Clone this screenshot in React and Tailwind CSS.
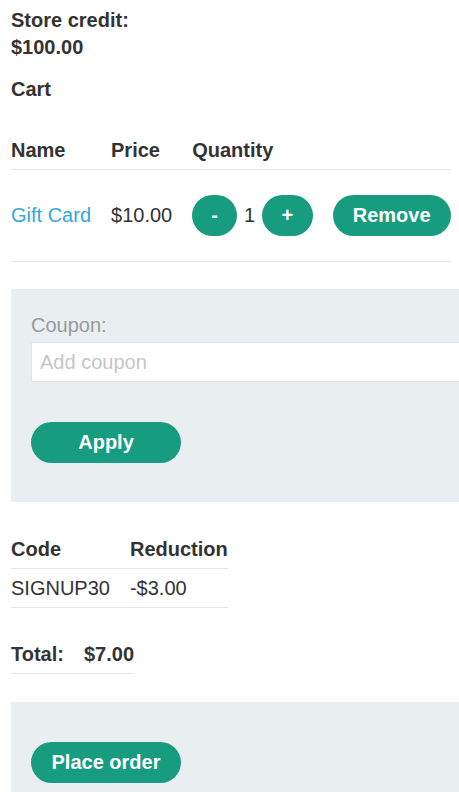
import React from "react";

const green = "bg-[#179c80]";

function Btn({ children, className = "" }) {
  return (
    <button
      className={`${green} h-[41px] rounded-full font-bold text-white text-[20px] leading-[27px] ${className}`}
    >
      {children}
    </button>
  );
}

export default function App() {
  return (
    <div
      className="h-[792px] w-full overflow-hidden bg-white text-[#333333] text-[20px] leading-[27px]"
      style={{ fontFamily: '"Liberation Sans", Arial, sans-serif' }}
    >
      <div className="pl-[11px] pt-[7px]">
        <div className="font-bold">Store credit:</div>
        <div className="font-bold">$100.00</div>
        <div className="mt-[15px] font-bold">Cart</div>

        <table className="mt-[28px] border-collapse">
          <thead>
            <tr className="border-b border-[#e3e5e6]">
              <th className="pt-[6px] pb-[5px] pr-[20px] text-left font-bold">Name</th>
              <th className="pt-[6px] pb-[5px] pr-[20px] text-left font-bold">Price</th>
              <th className="pt-[6px] pb-[5px] pr-[20px] text-left font-bold">Quantity</th>
              <th className="pt-[6px] pb-[5px]"></th>
            </tr>
          </thead>
          <tbody>
            <tr className="border-b border-[#e3e5e6]">
              <td className="py-[25px] pr-[20px] align-middle">
                <a className="text-[#35a7dd]">Gift Card</a>
              </td>
              <td className="py-[25px] pr-[20px] align-middle">$10.00</td>
              <td className="py-[25px] pr-[20px] align-middle">
                <div className="flex items-center">
                  <Btn className="px-[19px]">-</Btn>
                  <span className="mx-[7px]">1</span>
                  <Btn className="px-[19.5px]">+</Btn>
                </div>
              </td>
              <td className="py-[25px] align-middle">
                <Btn className="px-[20px]">Remove</Btn>
              </td>
            </tr>
          </tbody>
        </table>
      </div>

      <div className="ml-[11px] mt-[27px] overflow-hidden bg-[#e9eef1] pl-[20px] pt-[23px] pb-[39px]">
        <div className="text-[#9a9a9a]">Coupon:</div>
        <input
          className="mt-[3px] block h-[40px] w-[calc(100%+20px)] border border-[#e2e4e5] bg-white px-[8px] text-[20px] text-[#333] outline-none placeholder:text-[#c6c6c6]"
          placeholder="Add coupon"
        />
        <Btn className="mt-[40px] block h-[40px] w-[150px]">Apply</Btn>
      </div>

      <div className="pl-[11px]">
        <table className="mt-[28px] border-collapse">
          <thead>
            <tr className="border-b border-[#e3e5e6]">
              <th className="pt-[6px] pb-[5px] pr-[20px] text-left font-bold">Code</th>
              <th className="pt-[6px] pb-[5px] text-left font-bold">Reduction</th>
            </tr>
          </thead>
          <tbody>
            <tr className="border-b border-[#e3e5e6]">
              <td className="pt-[6px] pb-[5px] pr-[20px]">SIGNUP30</td>
              <td className="pt-[6px] pb-[5px]">-$3.00</td>
            </tr>
          </tbody>
        </table>

        <table className="mt-[27px] border-collapse">
          <tbody>
            <tr className="border-b border-[#e3e5e6]">
              <td className="pt-[6px] pb-[5px] pr-[20px] font-bold">Total:</td>
              <td className="pt-[6px] pb-[5px] font-bold">$7.00</td>
            </tr>
          </tbody>
        </table>
      </div>

      <div className="ml-[11px] mt-[28px] bg-[#e9eef1] pl-[20px] pt-[40px] pb-[40px]">
        <Btn className="block h-[40px] w-[150px]">Place order</Btn>
      </div>
    </div>
  );
}
